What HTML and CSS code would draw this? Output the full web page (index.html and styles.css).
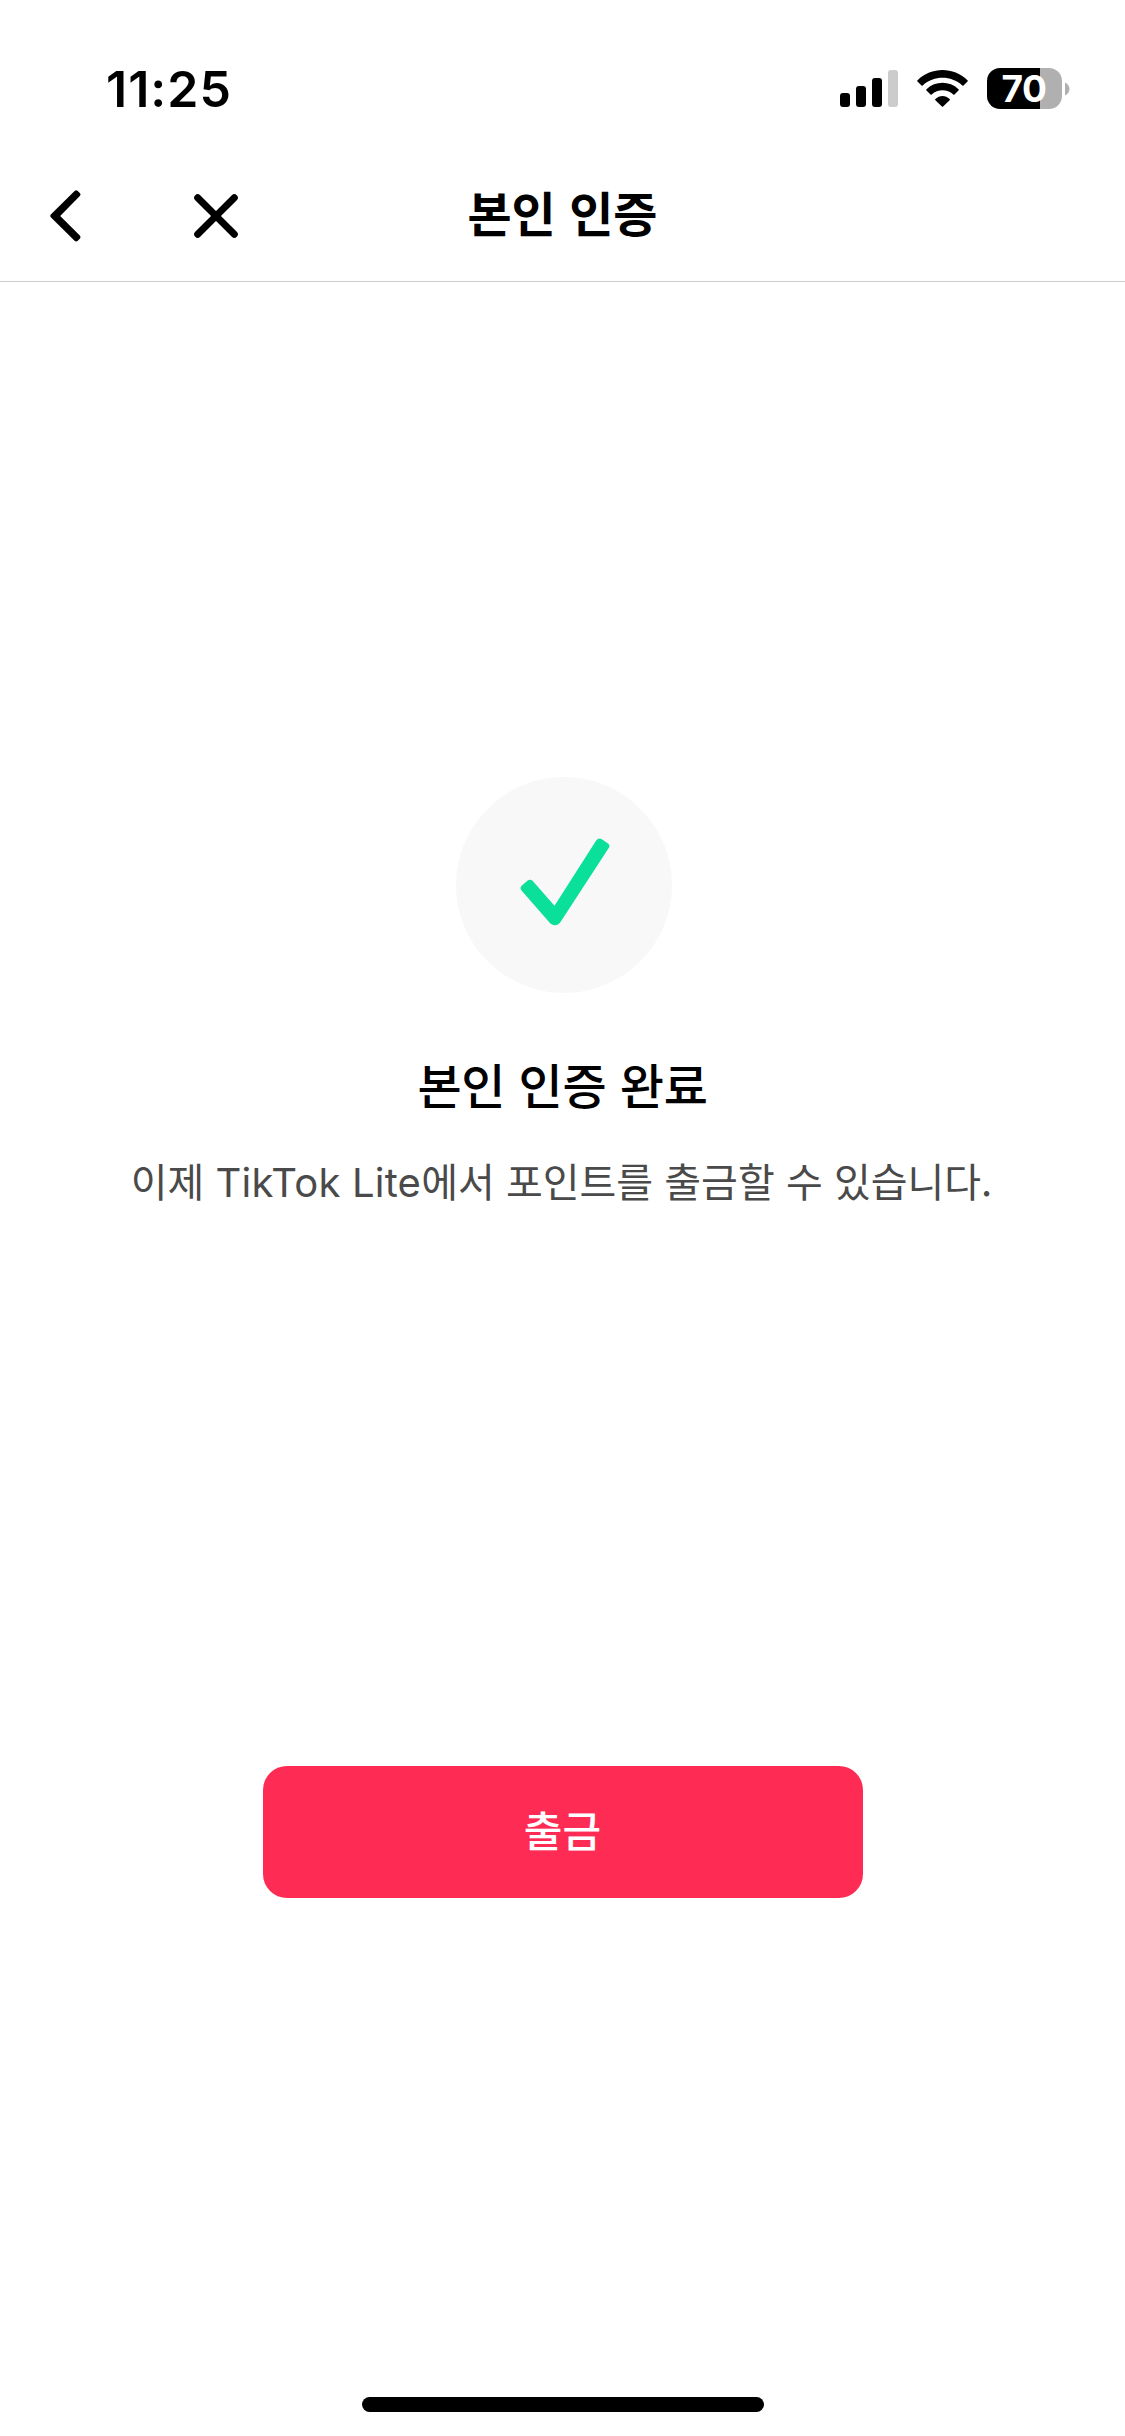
FILE: index.html
```html
<!DOCTYPE html>
<html lang="ko">
<head>
<meta charset="utf-8">
<title>본인 인증</title>
<link rel="stylesheet" href="styles.css">
</head>
<body>
<div class="screen">
  <header class="status">
    <div class="time">11:25</div>
    <div class="indicators">
      <svg class="signal" width="58" height="37" viewBox="0 0 58 37">
        <rect x="0" y="23" width="10" height="14" rx="3"/>
        <rect x="16" y="16" width="10" height="21" rx="3"/>
        <rect x="32" y="8" width="10" height="29" rx="3"/>
        <rect x="48" y="0" width="10" height="37" rx="3" fill="#ccc"/>
      </svg>
      <svg class="wifi" width="51" height="37" viewBox="0 0 51 37">
        <path d="M.5 10.2C14.6-3.4 36.4-3.4 50.5 10.2q.6.6 0 1.2l-4 4q-.6.6-1.2 0C34 5.200 17 5.200 5.700 15.400q-.6.6-1.200 0l-4-4q-.6-.6 0-1.200z"/>
        <path d="M9.500 19.200c9-8.500 23-8.500 32 0q.7.6 0 1.200l-4 4q-.6.6-1.200 0c-6.200-5.600-15.400-5.600-21.600 0q-.6.6-1.200 0l-4-4q-.7-.6 0-1.200z"/>
        <path d="M18.400 28.900c4.200-3.900 10-3.900 14.200 0q.7.600 0 1.300l-6.500 6.300q-.6.600-1.200 0l-6.500-6.300q-.7-.7 0-1.300z"/>
      </svg>
      <div class="battery"><span class="level">70</span></div>
      <svg class="nub" width="5" height="14" viewBox="0 0 5 14"><path d="M0 .5C6 3.500 6 10.500 0 13.500z"/></svg>
    </div>
  </header>
  <nav class="navbar">
    <div class="actions">
      <svg class="back" width="34" height="56" viewBox="0 0 34 56"><path d="M26.600 3Q28.200 1.500 29.800 3L32 5.200Q33.300 6.600 31.800 8.100L12.200 28 31.800 47.500Q33.300 49 32 50.400L29.800 52.800Q28.200 54.300 26.600 52.800L2.800 29.300Q1.600 28 2.800 26.600z"/></svg>
      <svg class="close" width="46" height="46" viewBox="0 0 46 46"><path d="M4.700 4.700l36.600 36.600M41.300 4.700l-36.600 36.600"/></svg>
    </div>
    <h1 class="title">본인 인증</h1>
    <div></div>
  </nav>
  <main class="content">
    <div class="badge">
      <svg width="216" height="216" viewBox="0 0 216 216"><path d="M65.600 108.700 72 103.300Q74.500 101.700 76.800 104L98.500 128.800 140.500 63Q142.500 60.500 145.500 62L152 66.500Q154.500 68.200 152.700 71L105.500 143.500C102 149.500 97 149.500 93.500 145.500L65.500 113.500Q63.500 111 65.600 108.700z"/></svg>
    </div>
    <h2 class="heading">본인 인증 완료</h2>
    <p class="desc">이제 <span class="latin">TikTok Lite</span>에서 포인트를 출금할 수 있습니다.</p>
    <button class="cta">출금</button>
  </main>
  <footer class="home"><div class="bar"></div></footer>
</div>
</body>
</html>
```
FILE: styles.css
```css
* { box-sizing: border-box; margin: 0; padding: 0; }
body { background: #fff; color: #000; font-family: "Noto Sans CJK KR", sans-serif; }
.screen { width: 1125px; height: 2436px; display: flex; flex-direction: column; overflow: hidden; }
.status { height: 150px; display: flex; justify-content: space-between; padding: 68px 55px 0 106px; }
.time { font: 600 50px/42px Inter, sans-serif; letter-spacing: 1px; }
.indicators { display: flex; align-items: flex-start; }
.signal, .wifi { margin-top: 2px; }
.wifi { margin-left: 19px; }
.battery { width: 75px; height: 41px; margin-left: 19px; border-radius: 13px; background: linear-gradient(to right, #000 53px, #b0b0b0 53px); display: flex; justify-content: center; }
.level { font: 700 37px/41px Inter, sans-serif; color: #fff; letter-spacing: -0.5px; padding-right: 1px; }
.nub { margin: 14px 0 0 3px; fill: #b0b0b0; }
.navbar { height: 132px; border-bottom: 1px solid #ccc; display: grid; grid-template-columns: 1fr auto 1fr; }
.actions { display: flex; padding: 38px 0 0 48px; }
.back { fill: #000; }
.close { margin: 5px 0 0 111px; fill: none; stroke: #000; stroke-width: 7px; stroke-linecap: round; }
.title { font-size: 48px; font-weight: 700; line-height: 72px; padding-top: 25px; }
.content { flex: 1; display: flex; flex-direction: column; align-items: center; padding-top: 495px; }
.badge { width: 216px; height: 216px; border-radius: 50%; background: #f8f8f8; margin-left: 3px; }
.badge svg { display: block; fill: #0be09b; }
.heading { font-size: 48px; font-weight: 500; line-height: 72px; margin-top: 54px; letter-spacing: -0.2px; }
.desc { font-size: 40px; line-height: 60px; margin-top: 31px; color: #4a4a4a; white-space: nowrap; }
.latin { font-family: Inter, sans-serif; letter-spacing: 0.2px; }
.desc { padding-right: 2px; }
.cta { width: 600px; height: 132px; margin-top: 553px; padding-bottom: 6px; border: 0; border-radius: 24px; background: #fe2c55; color: #fff; font: 500 42px/60px "Noto Sans CJK KR", sans-serif; }
.home { height: 39px; display: flex; justify-content: center; }
.bar { width: 402px; height: 15px; border-radius: 8px; background: #000; }
```
